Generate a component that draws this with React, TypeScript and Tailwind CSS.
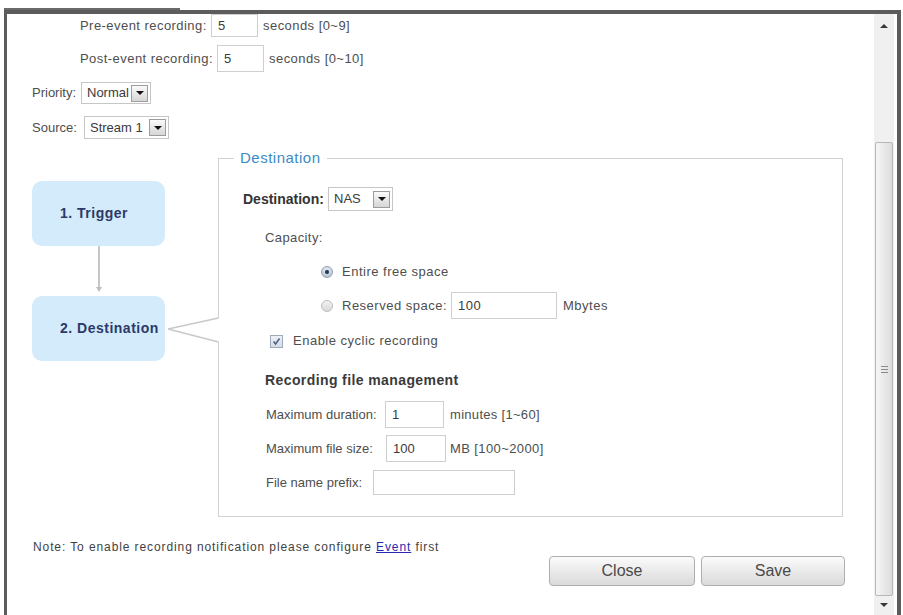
import type { ReactNode } from 'react';

function TextBox({ className, value }: { className: string; value?: string }) {
    return (
        <div className={`flex items-center border border-[#cfcfcf] bg-white pl-[6px] text-[13px] text-[#3a3a3a] ${className}`}>
            {value}
        </div>
    );
}

function DropDown({ className, value }: { className: string; value: string }) {
    return (
        <div className={`flex items-center justify-between border border-[#c6c6c6] bg-white pr-[2px] pl-[5px] text-[13px] text-[#3a3a3a] ${className}`}>
            <span>{value}</span>
            <span className="flex h-[17px] w-[17px] items-center justify-center border border-[#9c9c9c] bg-gradient-to-b from-[#fafafa] to-[#d6d6d6]">
                <span className="h-0 w-0 border-x-[4px] border-t-[4px] border-x-transparent border-t-[#111]" />
            </span>
        </div>
    );
}

function Radio({ checked }: { checked?: boolean }) {
    return checked ? (
        <span className="flex h-[12px] w-[12px] items-center justify-center rounded-full border border-[#8d9db2] bg-gradient-to-b from-[#dfe6ee] to-[#b9c6d4]">
            <span className="h-[4px] w-[4px] rounded-full bg-[#22344f]" />
        </span>
    ) : (
        <span className="block h-[12px] w-[12px] rounded-full border border-[#bdbdbd] bg-gradient-to-b from-[#f2f2f2] to-[#d9d9d9]" />
    );
}

function Row({ className, children }: { className: string; children: ReactNode }) {
    return <div className={`flex items-center ${className}`}>{children}</div>;
}

export default function App() {
    return (
        <div className="h-[615px] w-[903px] overflow-hidden bg-white font-['Liberation_Sans',Arial,sans-serif] text-[13px] text-[#4e4e4e]">
            {/* top strip */}
            <div className="h-[10px]">
                <div className="ml-[4px] h-[2px] w-[176px] translate-y-[8px] bg-[#6a6a6a]" />
            </div>

            {/* window */}
            <div className="ml-[4px] flex h-[605px] w-[897px] border-t-[4px] border-r-[4px] border-l-[3px] border-[#5c5c5c]">
                {/* content */}
                <div className="flex-1">
                    <Row className="h-[23px] tracking-[0.45px]">
                        <span className="ml-[73px] w-[131px] shrink-0">Pre-event recording:</span>
                        <TextBox className="h-[23px] w-[47px]" value="5" />
                        <span className="ml-[5px]">seconds [0~9]</span>
                    </Row>
                    <Row className="mt-[8px] h-[27px] tracking-[0.45px]">
                        <span className="ml-[73px] w-[137px] shrink-0">Post-event recording:</span>
                        <TextBox className="h-[27px] w-[47px]" value="5" />
                        <span className="ml-[5px]">seconds [0~10]</span>
                    </Row>
                    <Row className="mt-[10px] h-[22px]">
                        <span className="ml-[25px] w-[49px]">Priority:</span>
                        <DropDown className="h-[22px] w-[70px]" value="Normal" />
                    </Row>
                    <Row className="mt-[12px] h-[23px]">
                        <span className="ml-[25px] w-[52px]">Source:</span>
                        <DropDown className="h-[23px] w-[85px]" value="Stream 1" />
                    </Row>

                    {/* main area */}
                    <div className="relative mt-[11px] flex">
                        {/* flow */}
                        <div className="w-[211px] pt-[31px] pl-[25px]">
                            <div className="flex h-[65px] w-[133px] items-center rounded-[10px] bg-[#d3ebfa] pl-[28px] text-[14px] font-bold tracking-[0.5px] text-[#2b3a6a]">
                                1. Trigger
                            </div>
                            <div className="flex h-[50px] w-[133px] flex-col items-center">
                                <div className="h-[41px] w-[2px] bg-[#c6c6c6]" />
                                <div className="h-0 w-0 border-x-[3px] border-t-[5px] border-x-transparent border-t-[#bdbdbd]" />
                            </div>
                            <div className="flex h-[65px] w-[133px] items-center rounded-[10px] bg-[#d3ebfa] pl-[28px] text-[14px] font-bold tracking-[0.5px] text-[#2b3a6a]">
                                2. Destination
                            </div>
                        </div>

                        {/* destination fieldset */}
                        <fieldset className="w-[625px] border border-[#d2d2d2] pb-[21px]">
                            <legend className="ml-[15px] px-[6px] text-[15px] leading-[16px] tracking-[0.5px] text-[#3b8bc6]">Destination</legend>
                            <Row className="mt-[21px] h-[24px]">
                                <span className="ml-[24px] w-[85px] text-[14px] font-bold text-[#333]">Destination:</span>
                                <DropDown className="h-[24px] w-[65px]" value="NAS" />
                            </Row>
                            <Row className="mt-[17px] h-[20px] tracking-[0.4px]">
                                <span className="ml-[46px]">Capacity:</span>
                            </Row>
                            <Row className="mt-[14px] h-[20px] tracking-[0.5px]">
                                <span className="ml-[102px]">
                                    <Radio checked />
                                </span>
                                <span className="ml-[9px]">Entire free space</span>
                            </Row>
                            <Row className="mt-[10px] h-[27px] tracking-[0.5px]">
                                <span className="ml-[102px]">
                                    <Radio />
                                </span>
                                <span className="ml-[9px] w-[109px] shrink-0">Reserved space:</span>
                                <TextBox className="h-[27px] w-[106px]" value="100" />
                                <span className="ml-[6px]">Mbytes</span>
                            </Row>
                            <Row className="mt-[12px] h-[20px]">
                                <span className="ml-[51px] flex h-[13px] w-[13px] items-center justify-center border border-[#9eabbb] bg-gradient-to-b from-[#eef2f6] to-[#d3dbe4]">
                                    <svg width="9" height="9" viewBox="0 0 9 9">
                                        <path d="M1.5 4.5 L3.6 7 L7.5 1.5" fill="none" stroke="#4a5f80" strokeWidth="1.5" />
                                    </svg>
                                </span>
                                <span className="ml-[10px] tracking-[0.5px]">Enable cyclic recording</span>
                            </Row>
                            <Row className="mt-[19px] h-[20px]">
                                <span className="ml-[46px] text-[14px] font-bold tracking-[0.4px] text-[#3a3a3a]">Recording file management</span>
                            </Row>
                            <Row className="mt-[11px] h-[27px]">
                                <span className="ml-[47px] w-[119px] shrink-0">Maximum duration:</span>
                                <TextBox className="h-[27px] w-[59px]" value="1" />
                                <span className="ml-[6px] tracking-[0.3px]">minutes [1~60]</span>
                            </Row>
                            <Row className="mt-[7px] h-[27px]">
                                <span className="ml-[47px] w-[120px] shrink-0">Maximum file size:</span>
                                <TextBox className="h-[27px] w-[60px]" value="100" />
                                <span className="ml-[4px] tracking-[0.4px]">MB [100~2000]</span>
                            </Row>
                            <Row className="mt-[8px] h-[25px]">
                                <span className="ml-[47px] w-[107px] shrink-0">File name prefix:</span>
                                <TextBox className="h-[25px] w-[142px]" />
                            </Row>
                        </fieldset>

                        {/* pointer from step box to fieldset */}
                        <svg className="absolute top-[165px] left-[158px]" width="62" height="30" viewBox="0 0 62 30">
                            <line x1="53.5" y1="3.5" x2="53.5" y2="26.5" stroke="#ffffff" strokeWidth="2" />
                            <path d="M3 14 L53.5 3 M3 14 L53.5 27" fill="none" stroke="#c9c9c9" strokeWidth="1.6" />
                        </svg>
                    </div>

                    {/* footer */}
                    <div className="flex items-start justify-between pr-[29px] pl-[26px]">
                        <p className="mt-[24px] text-[12px] leading-[13px] tracking-[0.9px] text-[#3f3f3f]">
                            Note: To enable recording notification please configure{' '}
                            <a href="#event" className="text-[#2a2ab0] underline">
                                Event
                            </a>{' '}
                            first
                        </p>
                        <div className="mt-[39px] flex gap-[6px]">
                            <button className="h-[30px] w-[146px] rounded-[4px] border border-[#aeaeae] bg-gradient-to-b from-[#fbfbfb] to-[#dadada] text-[16px] text-[#4a4a4a]">
                                Close
                            </button>
                            <button className="h-[30px] w-[144px] rounded-[4px] border border-[#aeaeae] bg-gradient-to-b from-[#fbfbfb] to-[#dadada] text-[16px] text-[#4a4a4a]">
                                Save
                            </button>
                        </div>
                    </div>
                </div>

                {/* scrollbar */}
                <div className="mr-[3px] flex w-[20px] flex-col bg-[#f0f0f0]">
                    <div className="flex h-[24px] items-center justify-center">
                        <span className="h-0 w-0 border-x-[4px] border-b-[4px] border-x-transparent border-b-[#3a3a3a]" />
                    </div>
                    <div className="h-[104px]" />
                    <div className="mx-[1px] flex h-[454px] items-center justify-center rounded-[2px] border border-[#b8b8b8] bg-gradient-to-r from-[#f6f6f6] to-[#dcdcdc]">
                        <div className="flex flex-col gap-[2px]">
                            <span className="h-[1px] w-[7px] bg-[#8a8a8a]" />
                            <span className="h-[1px] w-[7px] bg-[#8a8a8a]" />
                            <span className="h-[1px] w-[7px] bg-[#8a8a8a]" />
                        </div>
                    </div>
                    <div className="flex h-[17px] items-center justify-center">
                        <span className="h-0 w-0 border-x-[4px] border-t-[4px] border-x-transparent border-t-[#3a3a3a]" />
                    </div>
                </div>
            </div>
        </div>
    );
}
